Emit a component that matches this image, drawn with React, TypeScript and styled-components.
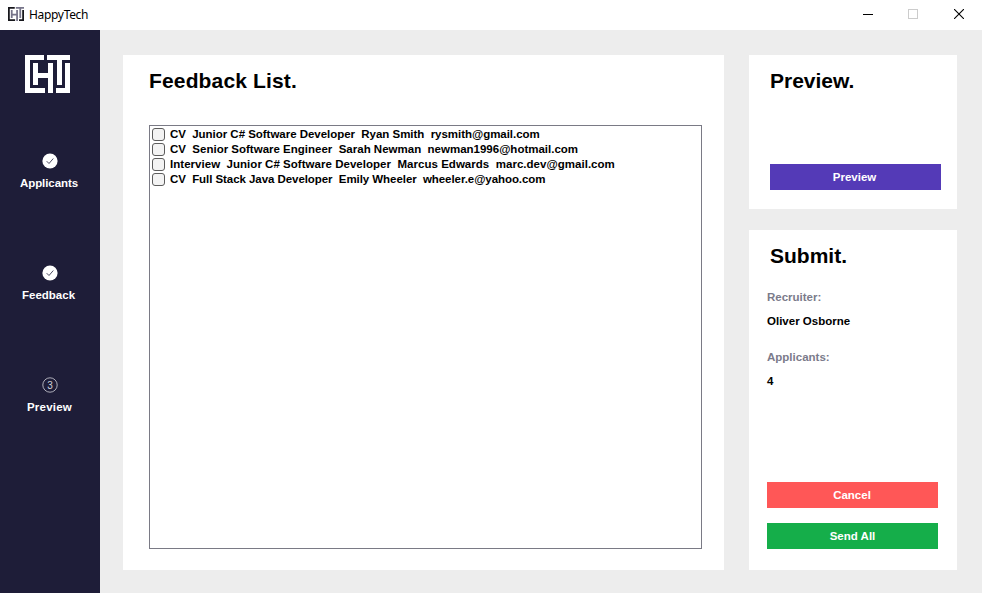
import React from "react";
import styled, { createGlobalStyle } from "styled-components";

const GlobalStyle = createGlobalStyle`
  * { box-sizing: border-box; }
  body {
    margin: 0;
    font-family: "Liberation Sans", Arial, sans-serif;
    font-weight: bold;
    font-size: 11.5px;
    line-height: 15px;
    color: #000;
  }
`;

const Window = styled.div`
  width: 982px;
  height: 593px;
  display: flex;
  flex-direction: column;
  background: #ededed;
  overflow: hidden;
`;

const TitleBar = styled.header`
  height: 30px;
  flex: none;
  display: flex;
  align-items: center;
  padding-left: 8px;
  background: #fff;
`;

const TitleIcon = styled.div`
  display: flex;
  padding-bottom: 2px;
`;

const TitleText = styled.span`
  flex: 1;
  margin-left: 5px;
  font: 400 12px/16px "Noto Sans", sans-serif;
  letter-spacing: -0.32px;
`;

const WindowControl = styled.div<{ $width: number }>`
  width: ${(p) => p.$width}px;
  height: 30px;
  display: flex;
  align-items: center;
  justify-content: center;
  padding-bottom: 2px;
`;

const MinimizeControl = styled(WindowControl)`
  padding-bottom: 2px;
`;

const Body = styled.div`
  flex: 1;
  display: flex;
`;

const Sidebar = styled.nav`
  width: 100px;
  display: flex;
  flex-direction: column;
  padding-top: 25px;
  background: #1e1d38;
  color: #fff;
`;

const Brand = styled.div`
  height: 38px;
  margin-left: 25px;
  display: flex;
`;

const Steps = styled.div`
  margin-top: 60px;
  display: flex;
  flex-direction: column;
  gap: 75px;
`;

const Step = styled.div`
  height: 37px;
  display: flex;
  flex-direction: column;
`;

const StepIcon = styled.div`
  height: 16px;
  margin: 0 0 7px 42px;
  display: flex;
`;

const Label = styled.span<{ $indent: number; $spacing: number }>`
  margin-left: ${(p) => p.$indent}px;
  letter-spacing: ${(p) => p.$spacing}px;
`;

const Content = styled.main`
  flex: 1;
  display: grid;
  grid-template-columns: 601px 208px;
  column-gap: 25px;
  padding: 25px 0 23px 23px;
`;

const Card = styled.section<{ $pad: string }>`
  display: flex;
  flex-direction: column;
  background: #fff;
  padding: ${(p) => p.$pad};
`;

const Side = styled.div`
  display: grid;
  grid-template-rows: 154px 340px;
  row-gap: 21px;
`;

const Heading = styled.h1<{ $indent?: number; $spacing?: number }>`
  margin: 0 0 0 ${(p) => p.$indent ?? 0}px;
  font-size: 21px;
  line-height: 26px;
  letter-spacing: ${(p) => p.$spacing ?? 0.15}px;
`;

const List = styled.ul`
  width: 553px;
  height: 424px;
  margin: 31px 0 0;
  padding: 1px 2px;
  border: 1px solid #7a7a85;
  list-style: none;
`;

const Item = styled.li`
  height: 15px;
  display: flex;
  align-items: center;
  white-space: pre;
`;

const Check = styled.input`
  appearance: none;
  flex: none;
  width: 13px;
  height: 13px;
  margin: 0 5px 0 0;
  border: 1px solid #5c5c5c;
  border-radius: 3px;
  background: #f3f3f3;
`;

const ItemText = styled.span<{ $spacing: number }>`
  letter-spacing: ${(p) => p.$spacing}px;
`;

const Button = styled.button<{ $color: string; $nudge?: number }>`
  width: 171px;
  height: 26px;
  padding: 0 ${(p) => p.$nudge ?? 0}px 0 0;
  border: 0;
  background: ${(p) => p.$color};
  color: #fff;
  font: inherit;
`;

const Actions = styled.div`
  margin-top: auto;
  display: grid;
  gap: 15px;
`;

const Fields = styled.dl`
  margin: 21px 0 0;
`;

const Term = styled.dt`
  color: #7b7b8b;
`;

const Value = styled.dd`
  margin: 9px 0 21px;
`;

const Logo = ({ width, height, color, inner }: { width: number; height: number; color: string; inner: string }) => (
  <svg width={width} height={height} viewBox="0 0 45 38" preserveAspectRatio="none" shapeRendering={width > 20 ? "crispEdges" : "auto"}>
    <path fill={color} d="M0 0H19V5H5V33H20V38H0ZM40 8H45V38H31V33H40Z" />
    <path fill={inner} d="M8 8H13V18H23V8H28V38H23V23H13V30H8ZM22 0H45V5H37V30H32V5H22Z" />
  </svg>
);

const DoneIcon = () => (
  <svg width="16" height="16" viewBox="0 0 16 16">
    <circle cx="8" cy="8" r="7.6" fill="#fff" />
    <path d="M4.7 8.2L7 10.5L11.3 5.5" fill="none" stroke="#1e1d38" strokeWidth="0.8" />
  </svg>
);

const NumberIcon = () => (
  <svg width="16" height="16" viewBox="0 0 16 16">
    <circle cx="8" cy="8" r="7.2" fill="none" stroke="#d0d0d8" strokeWidth="0.8" />
    <text x="8" y="11.5" textAnchor="middle" fontSize="10" fontWeight="400" fill="#d0d0d8">3</text>
  </svg>
);

const steps = [
  { label: "Applicants", indent: 20, spacing: -0.08, done: true },
  { label: "Feedback", indent: 22, spacing: 0, done: true },
  { label: "Preview", indent: 27, spacing: 0.2, done: false },
];

const items = [
  { text: "CV  Junior C# Software Developer  Ryan Smith  rysmith@gmail.com", spacing: -0.03 },
  { text: "CV  Senior Software Engineer  Sarah Newman  newman1996@hotmail.com", spacing: 0 },
  { text: "Interview  Junior C# Software Developer  Marcus Edwards  marc.dev@gmail.com", spacing: 0.03 },
  { text: "CV  Full Stack Java Developer  Emily Wheeler  wheeler.e@yahoo.com", spacing: -0.06 },
];

export default function App() {
  return (
    <Window>
      <GlobalStyle />
      <TitleBar>
        <TitleIcon>
          <Logo width={16} height={14} color="#17171c" inner="#77758a" />
        </TitleIcon>
        <TitleText>HappyTech</TitleText>
        <MinimizeControl $width={45}>
          <svg width="10" height="10"><path d="M0 5.5H10" stroke="#000" /></svg>
        </MinimizeControl>
        <WindowControl $width={45}>
          <svg width="10" height="10"><rect x=".5" y=".5" width="9" height="9" fill="none" stroke="#ccc" /></svg>
        </WindowControl>
        <WindowControl $width={47}>
          <svg width="10" height="10"><path d="M0 0L10 10M10 0L0 10" stroke="#000" strokeWidth="1.1" /></svg>
        </WindowControl>
      </TitleBar>
      <Body>
        <Sidebar>
          <Brand>
            <Logo width={45} height={38} color="#fff" inner="#fff" />
          </Brand>
          <Steps>
            {steps.map((s) => (
              <Step key={s.label}>
                <StepIcon>{s.done ? <DoneIcon /> : <NumberIcon />}</StepIcon>
                <Label $indent={s.indent} $spacing={s.spacing}>{s.label}</Label>
              </Step>
            ))}
          </Steps>
        </Sidebar>
        <Content>
          <Card $pad="13px 0 0 26px">
            <Heading>Feedback List.</Heading>
            <List>
              {items.map((i) => (
                <Item key={i.text}>
                  <Check type="checkbox" />
                  <ItemText $spacing={i.spacing}>{i.text}</ItemText>
                </Item>
              ))}
            </List>
          </Card>
          <Side>
            <Card $pad="13px 0 19px 21px">
              <Heading $spacing={0}>Preview.</Heading>
              <Actions>
                <Button $color="#543ab7" $nudge={2}>Preview</Button>
              </Actions>
            </Card>
            <Card $pad="13px 0 21px 18px">
              <Heading $indent={3} $spacing={0}>Submit.</Heading>
              <Fields>
                <Term>Recruiter:</Term>
                <Value>Oliver Osborne</Value>
                <Term>Applicants:</Term>
                <Value>4</Value>
              </Fields>
              <Actions>
                <Button $color="#ff5757" $nudge={1}>Cancel</Button>
                <Button $color="#15ae4a">Send All</Button>
              </Actions>
            </Card>
          </Side>
        </Content>
      </Body>
    </Window>
  );
}
